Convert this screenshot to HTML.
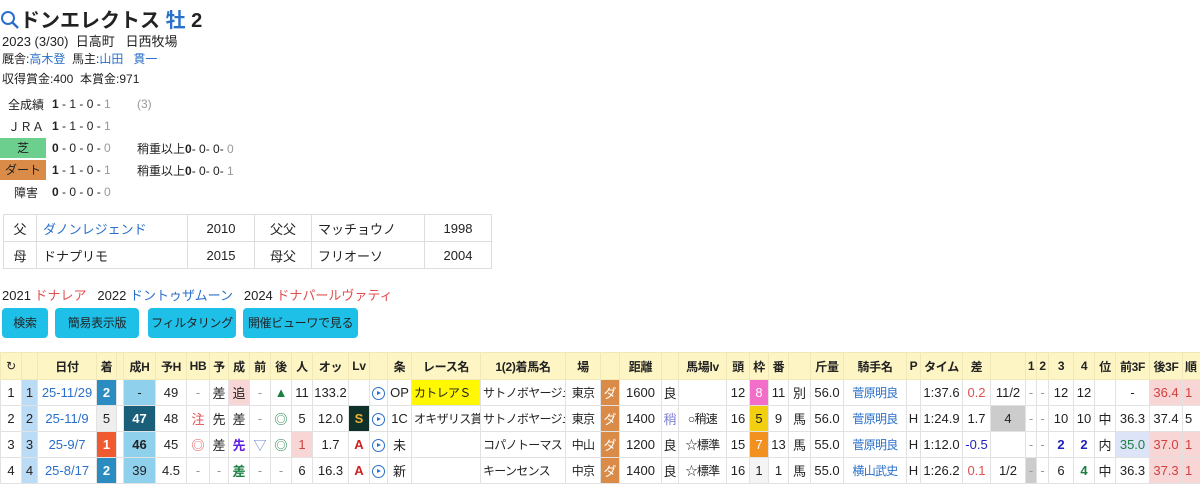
<!DOCTYPE html>
<html><head><meta charset="utf-8"><style>
body{margin:0;background:#fff;font-family:"Liberation Sans","Noto Sans CJK JP",sans-serif;font-size:13px;color:#222;width:1200px;height:486px;overflow:hidden;position:relative}
.a{position:absolute;white-space:nowrap}
.blue{color:#2a6fc9}.red{color:#e05050}
.rec td{padding:0;height:22px}
.badge{display:inline-block;width:46px;height:20px;line-height:20px;text-align:center}
.g{color:#999}
.ped{position:absolute;left:3px;top:214px;border-collapse:collapse;width:489px}
.ped td{border:1px solid #ddd;height:26px;padding:0 6px}
.btn{position:absolute;top:308px;height:30px;line-height:30px;background:#1ec0e8;border-radius:4px;color:#222;font-size:12px;text-align:center;letter-spacing:-0.3px}
table.m{position:absolute;left:0;top:352px;border-collapse:collapse;table-layout:fixed;width:1206px;font-size:13px}
.m td{border:1px solid #e2e2e2;height:25px;padding:0;text-align:center;white-space:nowrap;overflow:hidden}
.m tr.h td{background:#fdf5c4;height:26px;font-weight:bold;border-color:#f0e8b8;font-size:12px;letter-spacing:-0.3px}
.m .l{text-align:left;padding-left:2px;font-size:12px;letter-spacing:-0.7px}
.m .j{font-size:12px;letter-spacing:-0.7px}
.ply{display:inline-block;width:11px;height:11px;border:1px solid #2a6fc9;border-radius:50%;position:relative;vertical-align:middle}
.ply:after{content:"";position:absolute;left:4px;top:3px;border-left:4px solid #2a6fc9;border-top:2.5px solid transparent;border-bottom:2.5px solid transparent}
</style></head><body>
<div class="a" style="left:0;top:4px;font-size:20px;font-weight:bold">
<svg width="20" height="20" viewBox="0 0 20 20" style="vertical-align:-3px"><circle cx="8" cy="8" r="6" fill="none" stroke="#2a6fc9" stroke-width="2"/><line x1="12.5" y1="12.5" x2="18" y2="18" stroke="#2a6fc9" stroke-width="2.4"/></svg>ドンエレクトス <span class="blue">牡</span> 2</div>
<div class="a" style="left:2px;top:31px">2023 (3/30)&nbsp; 日高町 &nbsp; 日西牧場</div>
<div class="a" style="left:2px;top:50px;font-size:12px">厩舎:<span class="blue">高木登</span>&nbsp; 馬主:<span class="blue">山田 &nbsp; 貫一</span></div>
<div class="a" style="left:2px;top:70px;font-size:12px">収得賞金:400&nbsp; 本賞金:971</div>
<table class="rec" style="position:absolute;left:0;top:93px;border-collapse:collapse;font-size:12px">
<tr><td style="width:52px;text-align:center">全成績</td><td style="width:85px"><b>1</b> - 1 - 0 - <span class="g">1</span></td><td class="g">(3)</td></tr>
<tr><td style="text-align:center">ＪＲＡ</td><td><b>1</b> - 1 - 0 - <span class="g">1</span></td><td></td></tr>
<tr><td><span class="badge" style="background:#6dcf8e">芝</span></td><td><b>0</b> - 0 - 0 - <span class="g">0</span></td><td>稍重以上<b>0</b>- 0- 0- <span class="g">0</span></td></tr>
<tr><td><span class="badge" style="background:#d98b47">ダート</span></td><td><b>1</b> - 1 - 0 - <span class="g">1</span></td><td>稍重以上<b>0</b>- 0- 0- <span class="g">1</span></td></tr>
<tr><td style="text-align:center">障害</td><td><b>0</b> - 0 - 0 - <span class="g">0</span></td><td></td></tr>
</table>
<table class="ped"><tr><td style="width:20px;text-align:center">父</td><td class="blue" style="width:138px">ダノンレジェンド</td><td style="width:54px;text-align:center">2010</td><td style="width:44px;text-align:center">父父</td><td style="width:100px">マッチョウノ</td><td style="text-align:center">1998</td></tr>
<tr><td style="text-align:center">母</td><td>ドナプリモ</td><td style="text-align:center">2015</td><td style="text-align:center">母父</td><td>フリオーソ</td><td style="text-align:center">2004</td></tr></table>
<div class="a" style="left:2px;top:285px">2021 <span class="red">ドナレア</span> &nbsp; 2022 <span class="blue">ドントゥザムーン</span> &nbsp; 2024 <span class="red">ドナパールヴァティ</span></div>
<div class="btn" style="left:2px;width:46px">検索</div>
<div class="btn" style="left:55px;width:84px">簡易表示版</div>
<div class="btn" style="left:148px;width:88px">フィルタリング</div>
<div class="btn" style="left:243px;width:115px">開催ビューワで見る</div>
<table class="m">
<colgroup><col style="width:21px"><col style="width:16px"><col style="width:59px"><col style="width:20px"><col style="width:7px"><col style="width:32px"><col style="width:31px"><col style="width:23px"><col style="width:19px"><col style="width:21px"><col style="width:21px"><col style="width:21px"><col style="width:21px"><col style="width:36px"><col style="width:21px"><col style="width:18px"><col style="width:24px"><col style="width:69px"><col style="width:85px"><col style="width:35px"><col style="width:19px"><col style="width:42px"><col style="width:17px"><col style="width:48px"><col style="width:23px"><col style="width:19px"><col style="width:20px"><col style="width:22px"><col style="width:33px"><col style="width:63px"><col style="width:14px"><col style="width:42px"><col style="width:28px"><col style="width:35px"><col style="width:11px"><col style="width:12px"><col style="width:25px"><col style="width:21px"><col style="width:21px"><col style="width:34px"><col style="width:33px"><col style="width:24px"></colgroup>
<tr class="h"><td style="font-weight:normal">↻</td><td></td><td>日付</td><td>着</td><td></td><td>成H</td><td>予H</td><td>HB</td><td>予</td><td>成</td><td>前</td><td>後</td><td>人</td><td>オッ</td><td>Lv</td><td></td><td>条</td><td>レース名</td><td>1(2)着馬名</td><td>場</td><td></td><td>距離</td><td></td><td>馬場lv</td><td>頭</td><td>枠</td><td>番</td><td></td><td>斤量</td><td>騎手名</td><td>P</td><td>タイム</td><td>差</td><td></td><td>1</td><td>2</td><td>3</td><td>4</td><td>位</td><td>前3F</td><td>後3F</td><td class="l">順</td></tr>
<tr><td>1</td><td style="background:#bcdcf5">1</td><td class="blue">25-11/29</td><td style="background:#2a8cc0;color:#fff;font-weight:bold">2</td><td></td><td style="background:#8fd0ec">-</td><td>49</td><td class="g">-</td><td>差</td><td style="background:#f9d6d6">追</td><td class="g">-</td><td style="color:#1a8040">▲</td><td>11</td><td>133.2</td><td></td><td><span class="ply"></span></td><td>OP</td><td class="l" style="background:#fff800">カトレアＳ</td><td class="l">サトノボヤージュ</td><td class="j">東京</td><td style="background:#d98b47;color:#fff">ダ</td><td>1600</td><td>良</td><td></td><td>12</td><td style="background:#f26ec8;color:#fff">8</td><td>11</td><td>別</td><td>56.0</td><td class="blue j">菅原明良</td><td></td><td>1:37.6</td><td class="red">0.2</td><td>11/2</td><td class="g">-</td><td class="g">-</td><td>12</td><td>12</td><td></td><td>-</td><td style="background:#f9d6d6;color:#d04040">36.4</td><td style="background:#f9d6d6;color:#d04040;text-align:left;padding-left:2px">1</td></tr>
<tr><td>2</td><td style="background:#bcdcf5">2</td><td class="blue">25-11/9</td><td style="background:#eee">5</td><td></td><td style="background:#1a5f7a;color:#fff;font-weight:bold">47</td><td>48</td><td class="red">注</td><td>先</td><td>差</td><td class="g">-</td><td style="color:#1a8040">◎</td><td>5</td><td>12.0</td><td style="background:#10302a;color:#f0b030;font-weight:bold">S</td><td><span class="ply"></span></td><td>1C</td><td class="l">オキザリス賞</td><td class="l">サトノボヤージュ</td><td class="j">東京</td><td style="background:#d98b47;color:#fff">ダ</td><td>1400</td><td style="color:#8080d0">稍</td><td class="j">○稍速</td><td>16</td><td style="background:#f2d010">5</td><td>9</td><td>馬</td><td>56.0</td><td class="blue j">菅原明良</td><td>H</td><td>1:24.9</td><td>1.7</td><td style="background:#ccc">4</td><td class="g">-</td><td class="g">-</td><td>10</td><td>10</td><td>中</td><td>36.3</td><td>37.4</td><td style="text-align:left;padding-left:2px">5</td></tr>
<tr><td>3</td><td style="background:#bcdcf5">3</td><td class="blue">25-9/7</td><td style="background:#f05a30;color:#fff;font-weight:bold">1</td><td></td><td style="background:#8fd0ec;font-weight:bold">46</td><td>45</td><td class="red">◎</td><td>差</td><td style="color:#6020e0;font-weight:bold">先</td><td style="color:#6080d0">▽</td><td style="color:#1a8040">◎</td><td style="background:#f9d6d6;color:#d04040">1</td><td>1.7</td><td style="color:#d02020;font-weight:bold">A</td><td><span class="ply"></span></td><td>未</td><td></td><td class="l">コパノトーマス</td><td class="j">中山</td><td style="background:#d98b47;color:#fff">ダ</td><td>1200</td><td>良</td><td class="j">☆標準</td><td>15</td><td style="background:#f29020;color:#fff">7</td><td>13</td><td>馬</td><td>55.0</td><td class="blue j">菅原明良</td><td>H</td><td>1:12.0</td><td style="color:#2020c0">-0.5</td><td></td><td class="g">-</td><td class="g">-</td><td style="color:#2020c0;font-weight:bold">2</td><td style="color:#2020c0;font-weight:bold">2</td><td>内</td><td style="background:#dde4f8;color:#1a8040">35.0</td><td style="background:#f9d6d6;color:#d04040">37.0</td><td style="background:#f9d6d6;color:#d04040;text-align:left;padding-left:2px">1</td></tr>
<tr><td>4</td><td style="background:#bcdcf5">4</td><td class="blue">25-8/17</td><td style="background:#2a8cc0;color:#fff;font-weight:bold">2</td><td></td><td style="background:#8fd0ec">39</td><td>4.5</td><td class="g">-</td><td class="g">-</td><td style="color:#1a8040;font-weight:bold">差</td><td class="g">-</td><td class="g">-</td><td>6</td><td>16.3</td><td style="color:#d02020;font-weight:bold">A</td><td><span class="ply"></span></td><td>新</td><td></td><td class="l">キーンセンス</td><td class="j">中京</td><td style="background:#d98b47;color:#fff">ダ</td><td>1400</td><td>良</td><td class="j">☆標準</td><td>16</td><td style="background:#f4f4f4">1</td><td>1</td><td>馬</td><td>55.0</td><td class="blue j">横山武史</td><td>H</td><td>1:26.2</td><td class="red">0.1</td><td>1/2</td><td style="background:#ccc" class="g">-</td><td class="g">-</td><td>6</td><td style="color:#1a8040;font-weight:bold">4</td><td>中</td><td>36.3</td><td style="background:#f9d6d6;color:#d04040">37.3</td><td style="background:#f9d6d6;color:#d04040;text-align:left;padding-left:2px">1</td></tr>
</table>
</body></html>
